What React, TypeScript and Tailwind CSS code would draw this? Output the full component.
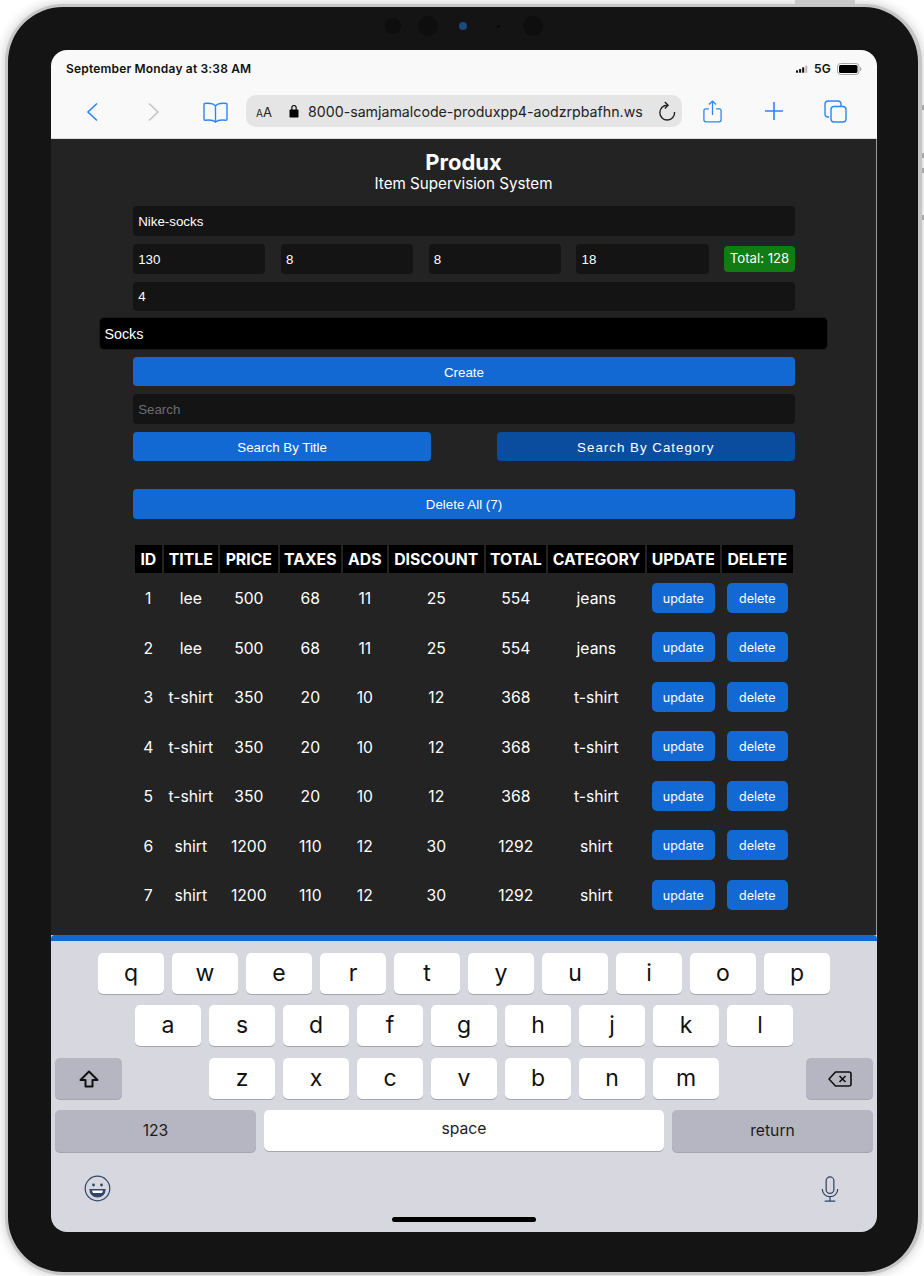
import React from "react";

const rows = [
  [1, "lee", 500, 68, 11, 25, 554, "jeans"],
  [2, "lee", 500, 68, 11, 25, 554, "jeans"],
  [3, "t-shirt", 350, 20, 10, 12, 368, "t-shirt"],
  [4, "t-shirt", 350, 20, 10, 12, 368, "t-shirt"],
  [5, "t-shirt", 350, 20, 10, 12, 368, "t-shirt"],
  [6, "shirt", 1200, 110, 12, 30, 1292, "shirt"],
  [7, "shirt", 1200, 110, 12, 30, 1292, "shirt"],
];
const heads = ["ID", "TITLE", "PRICE", "TAXES", "ADS", "DISCOUNT", "TOTAL", "CATEGORY", "UPDATE", "DELETE"];
const widths = [27, 54, 58, 61, 44, 95, 60, 97, 73, 71];

function Field({ children, className = "" }: { children: React.ReactNode; className?: string }) {
  return (
    <div className={`h-[29.6px] flex items-center pl-[5px] pt-[1.5px] rounded-[4px] bg-[#141414] text-[13.33px] font-['Liberation_Sans',sans-serif] ${className}`}>
      {children}
    </div>
  );
}

function Key({ label, className = "" }: { label: React.ReactNode; className?: string }) {
  return (
    <div className={`h-[41px] w-[66px] shrink-0 flex items-center justify-center rounded-[5px] bg-white text-[#111] text-[23px] shadow-[0_1px_0_#a4a5ad] ${className}`}>
      {label}
    </div>
  );
}

function Slot({ className }: { className: string }) {
  return (
    <div className="w-[35px] flex justify-center">
      <div className={`rounded-full ${className}`} />
    </div>
  );
}

const blue = "#2c85f6";
const btn = "h-[29.6px] pt-[2.5px] rounded-[4px] flex items-center justify-center text-[13.33px] font-['Liberation_Sans',sans-serif]";

export default function App() {
  return (
    <div className="w-[924px] h-[1276px] bg-white overflow-hidden font-['Inter',sans-serif] pt-[4px] pl-[5px]">
      <div className="relative w-[917px] h-[1271px] rounded-[58px] border-[3px] border-r-[4px] border-[#c6c6c6] bg-[#141414] shadow-[0_0_12px_rgba(0,0,0,0.22)] flex flex-col pl-[43px]">
        <div className="absolute -top-[7px] left-[787px] w-[60px] h-[4px] bg-[#c9c9c9]" />
        <div className="absolute -right-[6px] top-[98px] w-[2px] h-[5px] bg-[#a8a8a8]" />
        <div className="absolute -right-[6px] top-[146px] w-[2px] h-[5px] bg-[#a8a8a8]" />
        <div className="absolute -right-[6px] top-[161px] w-[2px] h-[5px] bg-[#a8a8a8]" />
        <div className="absolute -right-[6px] top-[208px] w-[2px] h-[5px] bg-[#a8a8a8]" />

        <div className="h-[43px] pb-[5px] pr-[2px] w-[826px] flex items-center justify-center">
          <Slot className="w-[16px] h-[16px] bg-[#0e0e0e]" />
          <Slot className="w-[20px] h-[20px] bg-[#0e0e0e]" />
          <Slot className="w-[8px] h-[8px] bg-[#1c4a7e]" />
          <Slot className="w-[3px] h-[3px] bg-[#070707]" />
          <Slot className="w-[20px] h-[20px] bg-[#0e0e0e]" />
        </div>

        <div className="w-[826px] h-[1182px] rounded-[16px] overflow-hidden flex flex-col">
          {/* Browser chrome */}
          <div className="h-[89px] shrink-0 bg-[#f9f9f9] border-b border-[#dcdcdc] flex flex-col">
            <div className="h-[36px] pt-[1px] flex items-center justify-between pl-[15px] pr-[15px]">
              <span className="text-[12px] font-semibold text-[#111] tracking-[0.18px]">September Monday at 3:38 AM</span>
              <div className="flex items-center gap-[6px]">
                <svg width="12" height="8" viewBox="0 0 14 9" fill="#111">
                  <rect x="0" y="6" width="2.4" height="3" rx="0.5" />
                  <rect x="3.6" y="4.500" width="2.4" height="4.500" rx="0.5" />
                  <rect x="7.2" y="2.500" width="2.4" height="6.500" rx="0.5" />
                  <rect x="10.8" y="0.500" width="2.4" height="8.500" rx="0.5" fill="#bdbdbd" />
                </svg>
                <span className="text-[12px] font-semibold text-[#111] tracking-[0.2px]">5G</span>
                <svg width="25" height="12" viewBox="0 0 25 12">
                  <rect x="0.5" y="0.5" width="21.5" height="11" rx="3" fill="none" stroke="#a9a9a9" />
                  <rect x="2" y="2" width="18.5" height="8" rx="1.6" fill="#000" />
                  <path d="M23 4v4c.9-.3 1.4-1.1 1.4-2s-.5-1.7-1.4-2z" fill="#a9a9a9" />
                </svg>
              </div>
            </div>
            <div className="flex-1 flex items-start">
              <div className="w-[195px] h-[32px] mt-[10px] flex items-center shrink-0">
                <svg className="ml-[35px]" width="12" height="20" viewBox="0 0 12 20" fill="none" stroke={blue} strokeWidth="1.6">
                  <path d="M11 1.500 2 10l9 8.500" />
                </svg>
                <svg className="ml-[50px]" width="12" height="20" viewBox="0 0 12 20" fill="none" stroke="#c4c4c4" strokeWidth="1.6">
                  <path d="M1 1.500 10 10l-9 8.500" />
                </svg>
                <svg className="ml-[43px]" width="25" height="21" viewBox="0 0 25 21" fill="none" stroke={blue} strokeWidth="1.4">
                  <path d="M12.500 4C10.500 1.600 6 1 1.500 1.500 1.100 1.600 1 1.900 1 2.300v14.700c0 1 .3 1.300 1.100 1.300 4-.6 8-.4 10.400 1.700 2.400-2.100 6.400-2.300 10.400-1.700.8 0 1.100-.3 1.100-1.300V2.300c0-.4-.1-.7-.5-.8C19 1 14.500 1.600 12.500 4zm0 0v15.900" />
                </svg>
              </div>
              <div className="w-[436px] h-[32px] mt-[9px] rounded-[10px] bg-[#e5e5e5] flex items-center pl-[10px]">
                <span className="text-[#222] w-[33px] shrink-0">
                  <span className="text-[10px]">A</span>
                  <span className="text-[13px]">A</span>
                </span>
                <svg className="shrink-0" width="10" height="14" viewBox="0 0 10 14">
                  <path d="M1.500 5.500h.8V3.600a2.700 2.700 0 0 1 5.400 0v1.900h.8c.7 0 1 .4 1 1.100v5.900c0 .7-.3 1-1 1h-7c-.7 0-1-.3-1-1V6.600c0-.7.3-1.100 1-1.100zm1.900 0h3.200V3.500a1.600 1.600 0 0 0-3.200 0z" fill="#000" />
                </svg>
                <div className="w-[336px] ml-[9px] pt-[1px] whitespace-nowrap text-[14.2px] text-[#222] shrink-0">
                  8000-samjamalcode-produxpp4-aodzrpbafhn.ws
                </div>
                <svg className="ml-[14px] shrink-0" width="18" height="21" viewBox="0 0 18 21" fill="none" stroke="#222" strokeWidth="1.4">
                  <path d="M9.500 4.200A7.400 7.400 0 1 0 16.600 11" />
                  <path d="M6.800.9l3.300 3.300-3.300 3.300" />
                </svg>
              </div>
              <div className="flex-1 h-[36px] mt-[7px] flex items-center">
                <svg className="ml-[21px]" width="19" height="23" viewBox="0 0 21 25" fill="none" stroke={blue} strokeWidth="1.4">
                  <path d="M6.500 9.500H3.300C2 9.500 1 10.400 1 11.800v9.900c0 1.300 1 2.300 2.300 2.300h14.400c1.300 0 2.300-1 2.300-2.300v-9.900c0-1.400-1-2.300-2.300-2.300h-3.200" />
                  <path d="M10.500 16.500V1M6.500 4.800 10.500 1l4 3.800" />
                </svg>
                <svg className="ml-[42px]" width="20" height="20" viewBox="0 0 20 20" fill="none" stroke={blue} strokeWidth="1.6">
                  <path d="M10 1v18M1 10h18" />
                </svg>
                <svg className="ml-[40px]" width="23" height="23" viewBox="0 0 23 23" fill="none" stroke={blue} strokeWidth="1.4">
                  <rect x="7" y="6.500" width="15" height="15.500" rx="3" />
                  <path d="M5 17H4.200C2.300 17 1 15.800 1 13.800V4.200C1 2.300 2.300 1 4.200 1h9.600C15.700 1 17 2.300 17 4.200v2.300" />
                </svg>
              </div>
            </div>
          </div>

          {/* Page */}
          <div className="flex-1 min-h-0 bg-[#232323] border-r border-[#9a9a9a] flex flex-col items-center text-white">
            <div className="mt-[10px] h-[26px] leading-[26px] text-[22px] font-bold">Produx</div>
            <div className="-mt-[1px] h-[20px] leading-[20px] text-[15.2px]">Item Supervision System</div>
            <div className="w-[661.600px] ml-[0.9px] mt-[12.400px] flex flex-col">
              <Field>Nike-socks</Field>
              <div className="mt-[8px] flex items-center gap-[15.700px]">
                <Field className="flex-1">130</Field>
                <Field className="flex-1">8</Field>
                <Field className="flex-1">8</Field>
                <Field className="flex-1">18</Field>
                <div className="w-[70.500px] h-[25.500px] rounded-[4px] bg-[#117c13] flex items-center justify-center text-[13.2px]">Total: 128</div>
              </div>
              <Field className="mt-[8px]">4</Field>
              <div className="mt-[6.300px] -ml-[33.700px] -mr-[33.200px] h-[32.500px] pt-[1px] rounded-[5px] bg-black flex items-center pl-[4px] text-[14.300px] border border-[#1a1a1a] font-['Liberation_Sans',sans-serif]">Socks</div>
              <div className={`mt-[6.700px] bg-[#1269d3] ${btn}`}>Create</div>
              <Field className="mt-[8px] text-[#6d6d6d]">Search</Field>
              <div className="mt-[8px] flex justify-between">
                <div className={`w-[298px] bg-[#1269d3] ${btn}`}>Search By Title</div>
                <div className={`w-[298px] bg-[#0a4d9e] tracking-[1px] ${btn}`}>Search By Category</div>
              </div>
              <div className={`mt-[27.800px] bg-[#1269d3] ${btn}`}>Delete All (7)</div>
            </div>
            <table className="mt-[24px] ml-[0.6px] w-[661px] table-fixed border-separate border-spacing-[2px]">
              <colgroup>
                {widths.map((w, i) => (
                  <col key={i} style={{ width: w }} />
                ))}
              </colgroup>
              <thead>
                <tr>
                  {heads.map((h) => (
                    <th key={h} className="h-[28px] p-0 pt-[2px] bg-black text-[15.800px] font-bold text-center whitespace-nowrap">{h}</th>
                  ))}
                </tr>
              </thead>
              <tbody>
                {rows.map((r) => (
                  <tr key={String(r[0])}>
                    {r.map((c, i) => (
                      <td key={i} className="h-[47.500px] p-0 pt-[1px] text-center text-[15.700px] whitespace-nowrap">{c}</td>
                    ))}
                    <td className="p-0 pb-[2px] text-center">
                      <button className="w-[63.500px] h-[30px] pt-[3px] rounded-[5px] bg-[#1269d3] text-[12.500px] text-white">update</button>
                    </td>
                    <td className="p-0 pb-[2px] text-center">
                      <button className="w-[61px] h-[30px] pt-[3px] rounded-[5px] bg-[#1269d3] text-[12.500px] text-white">delete</button>
                    </td>
                  </tr>
                ))}
              </tbody>
            </table>
          </div>

          {/* Keyboard */}
          <div className="h-[297px] shrink-0 bg-[#d6d7df] flex flex-col">
            <div className="h-[6px] bg-[#1269d3] rounded-t-[4px]" />
            <div className="mt-[12px] flex justify-center gap-[8px]">
              {"qwertyuiop".split("").map((k) => (
                <Key key={k} label={k} />
              ))}
            </div>
            <div className="mt-[11px] flex justify-center gap-[8px]">
              {"asdfghjkl".split("").map((k) => (
                <Key key={k} label={k} />
              ))}
            </div>
            <div className="mt-[12px] px-[4px] flex items-center justify-between">
              <Key
                className="!bg-[#b5b6c2] w-[67px]"
                label={
                  <svg width="20" height="18" viewBox="0 0 20 18" fill="none" stroke="#111" strokeWidth="2" strokeLinejoin="round">
                    <path d="M10 1.500 1.500 10h5v6.500h7V10h5z" />
                  </svg>
                }
              />
              <div className="flex gap-[8px]">
                {"zxcvbnm".split("").map((k) => (
                  <Key key={k} label={k} />
                ))}
              </div>
              <Key
                className="!bg-[#b5b6c2] w-[67px]"
                label={
                  <svg width="24" height="16" viewBox="0 0 24 16" fill="none" stroke="#111" strokeWidth="1.600" strokeLinejoin="round">
                    <path d="M7.500 1H21c1.300 0 2 .8 2 2v10c0 1.200-.7 2-2 2H7.500L1 8z" />
                    <path d="M11.500 5l6 6M17.500 5l-6 6" />
                  </svg>
                }
              />
            </div>
            <div className="mt-[11px] px-[4px] flex justify-between text-[15.700px] text-[#1c1c1c]">
              <div className="w-[201px] h-[42px] rounded-[5px] bg-[#b5b6c2] flex items-center justify-center shadow-[0_1px_0_#a4a5ad]">123</div>
              <div className="w-[400px] h-[41px] pb-[3px] rounded-[5px] bg-white flex items-center justify-center shadow-[0_1px_0_#a4a5ad]">space</div>
              <div className="w-[201px] h-[42px] rounded-[5px] bg-[#b5b6c2] flex items-center justify-center shadow-[0_1px_0_#a4a5ad]">return</div>
            </div>
            <div className="mt-[23px] flex items-center justify-between pl-[33px] pr-[38px]">
              <svg width="27" height="27" viewBox="0 0 27 27" fill="none" stroke="#2f4668" strokeWidth="1.200">
                <circle cx="13.500" cy="13.500" r="12.300" />
                <circle cx="9.500" cy="10" r="1.400" fill="#2f4668" stroke="none" />
                <circle cx="17.500" cy="10" r="1.400" fill="#2f4668" stroke="none" />
                <path d="M6 14.500h15c0 4.500-3.300 7.500-7.500 7.500S6 19 6 14.500z" fill="#2f4668" />
                <path d="M8 15.600h11c-.2 1-.5 1.700-1 2.300H9c-.5-.6-.8-1.300-1-2.300z" fill="#fff" stroke="none" />
              </svg>
              <svg width="18" height="26" viewBox="0 0 18 27" fill="none" stroke="#2f4668" strokeWidth="1.300">
                <rect x="5" y="1" width="8" height="17" rx="4" />
                <path d="M1 13.500c0 5 3.500 8 8 8s8-3 8-8M9 21.500V26M3.500 26h11" />
              </svg>
            </div>
            <div className="mt-[15px] mx-auto w-[144px] h-[5px] rounded-full bg-black" />
          </div>
        </div>
      </div>
    </div>
  );
}
